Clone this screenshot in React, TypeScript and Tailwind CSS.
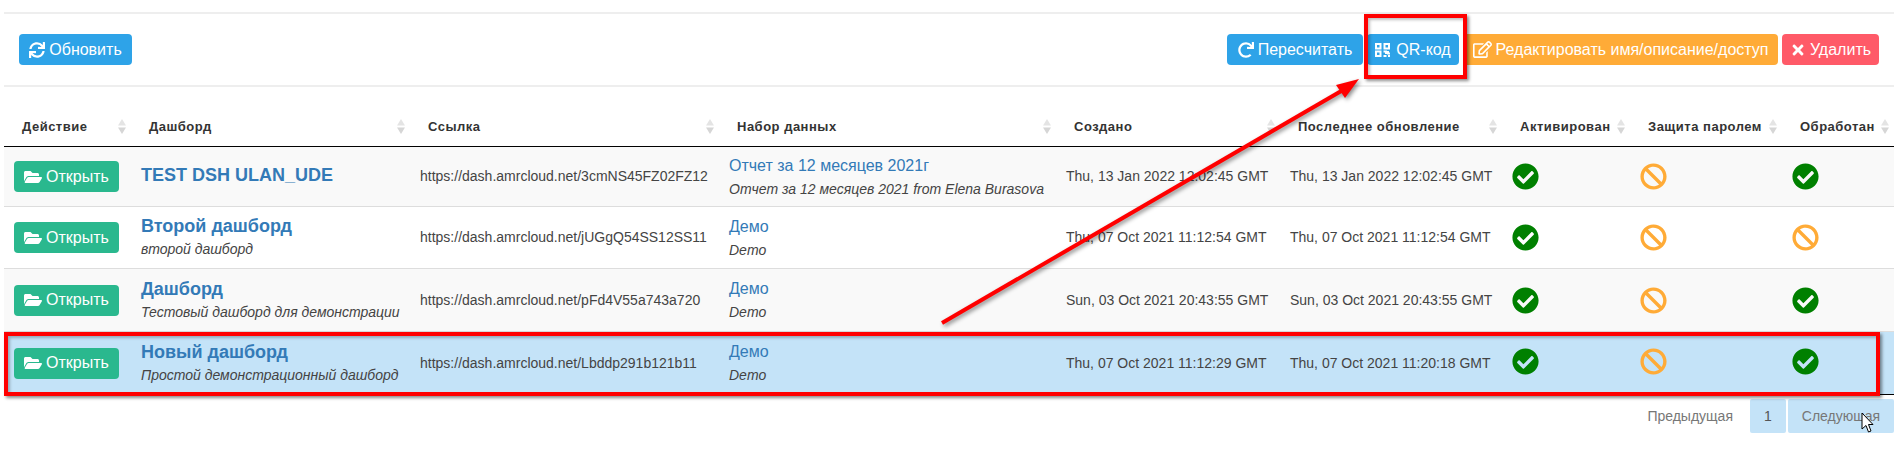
import type { ReactNode } from 'react';
import { FaSync, FaRedo, FaRegEdit, FaTimes, FaFolderOpen, FaCheckCircle, FaBan } from 'react-icons/fa';

interface Row {
    name: string;
    sub?: string;
    url: string;
    dataset: string;
    datasetSub: string;
    created: string;
    updated: string;
    done: boolean;
    height: string;
    rowBg: string;
}

const rows: Row[] = [
    {
        name: 'TEST DSH ULAN_UDE',
        url: 'https://dash.amrcloud.net/3cmNS45FZ02FZ12',
        dataset: 'Отчет за 12 месяцев 2021г',
        datasetSub: 'Отчет за 12 месяцев 2021 from Elena Burasova',
        created: 'Thu, 13 Jan 2022 12:02:45 GMT',
        updated: 'Thu, 13 Jan 2022 12:02:45 GMT',
        done: true,
        height: 'h-[60px]',
        rowBg: 'bg-[#f9f9f9]',
    },
    {
        name: 'Второй дашборд',
        sub: 'второй дашборд',
        url: 'https://dash.amrcloud.net/jUGgQ54SS12SS11',
        dataset: 'Демо',
        datasetSub: 'Demo',
        created: 'Thu, 07 Oct 2021 11:12:54 GMT',
        updated: 'Thu, 07 Oct 2021 11:12:54 GMT',
        done: false,
        height: 'h-[62px]',
        rowBg: 'bg-white',
    },
    {
        name: 'Дашборд',
        sub: 'Тестовый дашборд для демонстрации',
        url: 'https://dash.amrcloud.net/pFd4V55a743a720',
        dataset: 'Демо',
        datasetSub: 'Demo',
        created: 'Sun, 03 Oct 2021 20:43:55 GMT',
        updated: 'Sun, 03 Oct 2021 20:43:55 GMT',
        done: true,
        height: 'h-[63px]',
        rowBg: 'bg-[#f9f9f9]',
    },
    {
        name: 'Новый дашборд',
        sub: 'Простой демонстрационный дашборд',
        url: 'https://dash.amrcloud.net/Lbddp291b121b11',
        dataset: 'Демо',
        datasetSub: 'Demo',
        created: 'Thu, 07 Oct 2021 11:12:29 GMT',
        updated: 'Thu, 07 Oct 2021 11:20:18 GMT',
        done: true,
        height: 'h-[63px]',
        rowBg: 'bg-[#c4e3f8]',
    },
];

const columns = [
    { title: 'Действие', width: 'w-[127px]' },
    { title: 'Дашборд', width: 'w-[279px]' },
    { title: 'Ссылка', width: 'w-[309px]' },
    { title: 'Набор данных', width: 'w-[337px]' },
    { title: 'Создано', width: 'w-[224px]' },
    { title: 'Последнее обновление', width: 'w-[222px]' },
    { title: 'Активирован', width: 'w-[128px]' },
    { title: 'Защита паролем', width: 'w-[152px]' },
    { title: 'Обработан', width: 'w-[112px]' },
];

const SortIcon = () => (
    <svg width="8" height="15" viewBox="0 0 8 15" className="shrink-0">
        <path d="M4 0 8 6.5H0Z" fill="#e4e4e4" />
        <path d="M0 8.5H8L4 15Z" fill="#d6d6d6" />
    </svg>
);

const QrIcon = () => (
    <svg width="15" height="14" viewBox="0 0 15 14" fill="none" stroke="currentColor" strokeWidth="2">
        <rect x="1" y="1" width="4.5" height="4.5" />
        <rect x="9.5" y="1" width="4.5" height="4.5" />
        <rect x="1" y="8.5" width="4.5" height="4.5" />
        <path d="M8.5 13h3M8.5 8.5h2.5v2.5M13 8v2.5h2M14 12v2" />
    </svg>
);

const Btn = ({ className, icon, children }: { className: string; icon: ReactNode; children: ReactNode }) => (
    <button className={`flex h-[31px] items-center justify-center gap-[4px] rounded-[4px] text-[16px] text-white ${className}`}>
        {icon}
        {children}
    </button>
);

const CheckIcon = () => <FaCheckCircle size={27} className="text-[#008000]" />;
const BanIcon = () => <FaBan size={27} className="text-[#ffab37]" />;

export default function App() {
    return (
        <div className="relative h-[472px] w-[1904px] overflow-hidden bg-white font-['Liberation_Sans',Arial,sans-serif] text-[14px] text-[#444]">
            <div className="px-[4px] pt-[12px] pr-[10px]">
                {/* Toolbar */}
                <div className="flex h-[75px] items-center justify-between border-y-2 border-[#eeeeee] pr-[15px] pl-[15px]">
                    <Btn className="w-[113px] bg-[#2ea3e8]" icon={<FaSync size={16} />}>Обновить</Btn>
                    <div className="flex gap-[4px]">
                        <Btn className="w-[136px] bg-[#2ea3e8]" icon={<FaRedo size={16} />}>Пересчитать</Btn>
                        <Btn className="w-[92px] gap-[6px] bg-[#2ea3e8]" icon={<QrIcon />}>QR-код</Btn>
                        <Btn className="w-[315px] bg-[#ffab37]" icon={<FaRegEdit size={19} />}>Редактировать имя/описание/доступ</Btn>
                        <Btn className="w-[97px] gap-[2px] bg-[#ff5a68]" icon={<FaTimes size={16} />}>Удалить</Btn>
                    </div>
                </div>

                {/* Table */}
                <table className="w-[1890px] table-fixed border-separate border-spacing-0">
                    <colgroup>
                        {columns.map(c => <col key={c.title} className={c.width} />)}
                    </colgroup>
                    <thead>
                        <tr className="h-[60px]">
                            {columns.map(c => (
                                <th key={c.title} className="border-b border-black pb-[10px] align-bottom text-left text-[13px] font-bold tracking-[0.5px] text-[#333]">
                                    <div className="flex items-center justify-between pr-[5px] pl-[18px] whitespace-nowrap">
                                        {c.title}
                                        <SortIcon />
                                    </div>
                                </th>
                            ))}
                        </tr>
                    </thead>
                    <tbody>
                        {rows.map((r, i) => {
                            const cell = `px-[10px] whitespace-nowrap border-b ${i === 3 ? 'border-black' : 'border-[#dddddd]'}`;
                            const iconCell = `${cell} ${i === 3 ? 'pb-[3px]' : ''}`;
                            return (
                                <tr key={r.name} className={`${r.height} ${r.rowBg}`}>
                                    <td className={cell}>
                                        <Btn className="w-[105px] bg-[#2ab88e]" icon={<FaFolderOpen size={18} />}>Открыть</Btn>
                                    </td>
                                    <td className={cell}>
                                        <div className={`text-[18px] leading-[24px] font-bold text-[#337ab7] ${r.sub ? '' : 'pb-[3px]'}`}>{r.name}</div>
                                        {r.sub && <div className="text-[14px] leading-[23px] italic">{r.sub}</div>}
                                    </td>
                                    <td className={cell}>{r.url}</td>
                                    <td className={cell}>
                                        <div className="text-[16px] leading-[24px] text-[#337ab7]">{r.dataset}</div>
                                        <div className="text-[14px] leading-[22px] italic">{r.datasetSub}</div>
                                    </td>
                                    <td className={cell}>{r.created}</td>
                                    <td className={cell}>{r.updated}</td>
                                    <td className={iconCell}><CheckIcon /></td>
                                    <td className={iconCell}><BanIcon /></td>
                                    <td className={iconCell}>{r.done ? <CheckIcon /> : <BanIcon />}</td>
                                </tr>
                            );
                        })}
                    </tbody>
                </table>

                {/* Pagination */}
                <div className="mt-[4px] flex h-[34px] justify-end text-[14px] text-[#777]">
                    <div className="flex items-center px-[17px]">Предыдущая</div>
                    <div className="mr-[2px] flex w-[36px] items-center justify-center rounded-[2px] bg-[#c4e3f8] text-[#555]">1</div>
                    <div className="flex w-[106px] items-center justify-center rounded-[2px] bg-[#c4e3f8]">Следующая</div>
                </div>
            </div>

            {/* Annotations drawn over the screenshot */}
            <div className="absolute top-[14px] left-[1364px] h-[65px] w-[103px] border-[4px] border-[#ff0000] shadow-[2px_2px_3px_rgba(0,0,0,0.45),inset_2px_2px_3px_rgba(0,0,0,0.25)]" />
            <div className="absolute top-[332px] left-[4px] h-[64px] w-[1876px] border-[4px] border-[#ff0000] shadow-[2px_2px_3px_rgba(0,0,0,0.45),inset_2px_2px_3px_rgba(0,0,0,0.25)]" />
            <svg width="1904" height="472" viewBox="0 0 1904 472" className="pointer-events-none absolute top-0 left-0">
                <g className="drop-shadow-[2px_2px_2px_rgba(0,0,0,0.45)]">
                    <path d="M942 323 1343 90" stroke="#ff0000" strokeWidth="4" />
                    <path d="M1359 79 1336 85 1345 98Z" fill="#ff0000" />
                </g>
                <path d="M1862 413V429L1866 425.5 1868.5 432 1871 431 1868.5 424.5H1873Z" fill="#fff" stroke="#000" strokeWidth="1" />
            </svg>
        </div>
    );
}
